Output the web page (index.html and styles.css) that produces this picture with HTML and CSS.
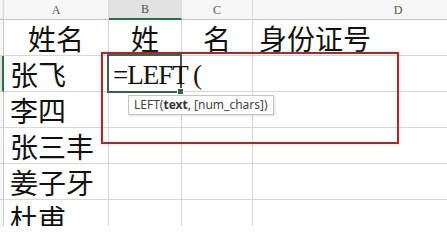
FILE: index.html
```html
<!DOCTYPE html>
<html lang="zh">
<head>
<meta charset="utf-8">
<title>Sheet</title>
<link rel="stylesheet" href="styles.css">
</head>
<body>
<div class="sheet">
  <div class="corner"></div>
  <div class="colhead">A</div>
  <div class="colhead active">B</div>
  <div class="colhead">C</div>
  <div class="colhead wide">D</div>

  <div class="rowhead"></div>
  <div class="cell center">姓名</div>
  <div class="cell center">姓</div>
  <div class="cell center">名</div>
  <div class="cell">身份证号</div>

  <div class="rowhead active"></div>
  <div class="cell">张飞</div>
  <div class="cell edit"><span class="formula">=LEFT (</span><span class="cursor-box"><span class="handle"></span></span></div>
  <div class="cell"></div>
  <div class="cell"></div>

  <div class="rowhead"></div>
  <div class="cell">李四</div>
  <div class="cell"></div>
  <div class="cell"></div>
  <div class="cell"></div>

  <div class="rowhead"></div>
  <div class="cell">张三丰</div>
  <div class="cell"></div>
  <div class="cell"></div>
  <div class="cell"></div>

  <div class="rowhead"></div>
  <div class="cell">姜子牙</div>
  <div class="cell"></div>
  <div class="cell"></div>
  <div class="cell"></div>

  <div class="rowhead"></div>
  <div class="cell">杜甫</div>
  <div class="cell"></div>
  <div class="cell"></div>
  <div class="cell"></div>
</div>
<div class="tooltip">LEFT(<b>text</b>, [num_chars])</div>
<div class="highlight"></div>
</body>
</html>
```

FILE: styles.css
```css
html, body {
  margin: 0;
  padding: 0;
  width: 447px;
  height: 226px;
  overflow: hidden;
  background: #ffffff;
}

.sheet {
  display: grid;
  grid-template-columns: 4px 105px 73px 71px 1fr;
  grid-template-rows: 20px repeat(6, 36px);
  width: 447px;
}

.sheet > div {
  box-sizing: border-box;
  border-right: 1px solid #d6d6d6;
  border-bottom: 1px solid #d6d6d6;
}

.sheet > div:nth-child(5n) {
  border-right: none;
}

.corner {
  background: #f4f4f4;
  border-bottom-color: #bdbdbd !important;
}

.colhead {
  background: #f7f7f7;
  border-right-color: #dedede !important;
  border-bottom-color: #c4c4c4 !important;
  font-family: "Liberation Serif", serif;
  font-size: 12px;
  color: #555555;
  display: flex;
  align-items: center;
  justify-content: center;
  padding-top: 1px;
}

.colhead.wide {
  padding-left: 96px;
}

.colhead.active {
  background: #e2e2e2;
  border-bottom: 2px solid #217346 !important;
  color: #3d5a45;
}

.rowhead {
  background: #f6f6f6;
  border-right-color: #c8c8c8 !important;
}

.rowhead.active {
  background: #e2e2e2;
  border-right: 2px solid #217346 !important;
}

.cell {
  font-family: "Noto Sans CJK SC", "Noto Sans", sans-serif;
  font-size: 28px;
  line-height: 32px;
  color: #111111;
  display: flex;
  align-items: center;
  padding-left: 6px;
  white-space: nowrap;
}

.cell.center {
  justify-content: center;
  padding-left: 0;
}

.cell.edit {
  position: relative;
  overflow: visible;
  z-index: 2;
  padding-left: 4px;
}

.formula {
  font-family: "Liberation Serif", serif;
  font-size: 27px;
  letter-spacing: -1px;
  color: #111111;
  padding-top: 3px;
  position: relative;
  z-index: 3;
}

.cursor-box {
  position: absolute;
  top: -2px;
  left: -2px;
  right: -1px;
  bottom: -2px;
  border: 2px solid #3d5f4a;
  pointer-events: none;
}

.handle {
  position: absolute;
  right: -4px;
  bottom: -4px;
  width: 5px;
  height: 5px;
  background: #3d5f4a;
  border: 1px solid #ffffff;
}

.tooltip {
  position: absolute;
  left: 128px;
  top: 95px;
  height: 20px;
  box-sizing: border-box;
  padding: 0 5px 0 5px;
  background: #ffffff;
  border: 1px solid #c4c4c4;
  box-shadow: 1px 1px 2px rgba(0, 0, 0, 0.12);
  font-family: "Noto Sans", "Open Sans", sans-serif;
  font-size: 12px;
  line-height: 18px;
  color: #444444;
  white-space: nowrap;
  z-index: 5;
}

.tooltip b {
  font-weight: 700;
  color: #333333;
}

.highlight {
  position: absolute;
  left: 101px;
  top: 52px;
  width: 298px;
  height: 92px;
  box-sizing: border-box;
  border: 2px solid #8c3535;
  box-shadow: 0 0 3px rgba(255, 80, 80, 0.35), inset 0 0 3px rgba(255, 80, 80, 0.25);
  z-index: 6;
}
```
